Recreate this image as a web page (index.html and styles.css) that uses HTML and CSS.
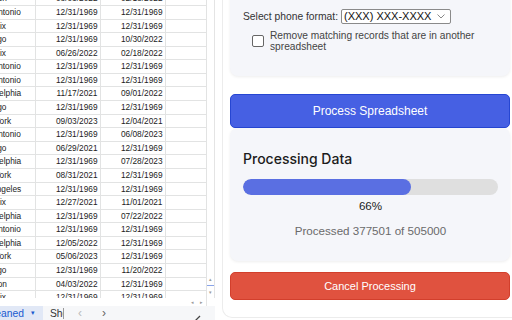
FILE: index.html
```html
<!DOCTYPE html>
<html lang="en">
<head>
    <meta charset="UTF-8">
    <meta name="viewport" content="width=device-width, initial-scale=1.0">
    <title>Spreadsheet Cleaner</title>
    <link rel="stylesheet" href="styles.css">
</head>
<body>
    <!-- Spreadsheet behind the sidebar -->
    <div class="sheet">
        <div class="grid-area">
            <div class="cells">
                <div class="row"><div>Houston</div><div class="num">08/03/2022</div><div class="num">02/18/2022</div><div></div></div>
                <div class="row"><div>San Antonio</div><div class="num">12/31/1969</div><div class="num">12/31/1969</div><div></div></div>
                <div class="row"><div>Phoenix</div><div class="num">12/31/1969</div><div class="num">12/31/1969</div><div></div></div>
                <div class="row"><div>Chicago</div><div class="num">12/31/1969</div><div class="num">10/30/2022</div><div></div></div>
                <div class="row"><div>Phoenix</div><div class="num">06/26/2022</div><div class="num">02/18/2022</div><div></div></div>
                <div class="row"><div>San Antonio</div><div class="num">12/31/1969</div><div class="num">12/31/1969</div><div></div></div>
                <div class="row"><div>San Antonio</div><div class="num">12/31/1969</div><div class="num">12/31/1969</div><div></div></div>
                <div class="row"><div>Philadelphia</div><div class="num">11/17/2021</div><div class="num">09/01/2022</div><div></div></div>
                <div class="row"><div>Chicago</div><div class="num">12/31/1969</div><div class="num">12/31/1969</div><div></div></div>
                <div class="row"><div>New York</div><div class="num">09/03/2023</div><div class="num">12/04/2021</div><div></div></div>
                <div class="row"><div>San Antonio</div><div class="num">12/31/1969</div><div class="num">06/08/2023</div><div></div></div>
                <div class="row"><div>Chicago</div><div class="num">06/29/2021</div><div class="num">12/31/1969</div><div></div></div>
                <div class="row"><div>Philadelphia</div><div class="num">12/31/1969</div><div class="num">07/28/2023</div><div></div></div>
                <div class="row"><div>New York</div><div class="num">08/31/2021</div><div class="num">12/31/1969</div><div></div></div>
                <div class="row"><div>Los Angeles</div><div class="num">12/31/1969</div><div class="num">12/31/1969</div><div></div></div>
                <div class="row"><div>Phoenix</div><div class="num">12/27/2021</div><div class="num">11/01/2021</div><div></div></div>
                <div class="row"><div>Philadelphia</div><div class="num">12/31/1969</div><div class="num">07/22/2022</div><div></div></div>
                <div class="row"><div>San Antonio</div><div class="num">12/31/1969</div><div class="num">12/31/1969</div><div></div></div>
                <div class="row"><div>Philadelphia</div><div class="num">12/05/2022</div><div class="num">12/31/1969</div><div></div></div>
                <div class="row"><div>New York</div><div class="num">05/06/2023</div><div class="num">12/31/1969</div><div></div></div>
                <div class="row"><div>Chicago</div><div class="num">12/31/1969</div><div class="num">11/20/2022</div><div></div></div>
                <div class="row"><div>Houston</div><div class="num">04/03/2022</div><div class="num">12/31/1969</div><div></div></div>
                <div class="row"><div>Phoenix</div><div class="num">12/31/1969</div><div class="num">12/31/1969</div><div></div></div>
            </div>
            <div class="vscroll">
                <span class="arrow">&#9652;</span>
                <span class="thumb"></span>
                <span class="arrow">&#9662;</span>
            </div>
        </div>
        <div class="hscroll">
            <span class="arrow">&#9666;</span>
            <span class="arrow">&#9656;</span>
        </div>
        <div class="tabs">
            <div class="tab active">Cleaned <span class="caret">&#9662;</span></div>
            <div class="tab plain"><span class="tab-name">Sheet1</span></div>
            <span class="nav dim">&#8249;</span>
            <span class="nav">&#8250;</span>
            <span class="tick">
                <svg width="8" height="8" viewBox="0 0 8 8"><path d="M1 7 L3 5 L7 1" fill="none" stroke="#444" stroke-width="1.2"/></svg>
            </span>
        </div>
    </div>

    <!-- Sidebar -->
    <div class="sidebar">
        <div class="card options">
            <div class="format-row">
                <label for="phone-format">Select phone format:</label>
                <span class="select-wrap">
                    <select id="phone-format">
                        <option>(XXX) XXX-XXXX</option>
                    </select>
                    <svg class="chevron" width="8" height="5" viewBox="0 0 8 5"><path d="M0.5 0.5 L4 4 L7.5 0.5" fill="none" stroke="#888" stroke-width="1"/></svg>
                </span>
            </div>
            <label class="check-row">
                <input type="checkbox">
                <span>Remove matching records that are in another spreadsheet</span>
            </label>
        </div>

        <button class="btn btn-primary">Process Spreadsheet</button>

        <div class="card progress-card">
            <h2>Processing Data</h2>
            <div class="bar"><div class="bar-fill" style="width: 66%"></div></div>
            <div class="percent">66%</div>
            <div class="count">Processed 377501 of 505000</div>
        </div>

        <button class="btn btn-cancel">Cancel Processing</button>
    </div>
</body>
</html>
```

FILE: styles.css
```css
/* Basic Reset */
* {
    margin: 0;
    padding: 0;
    box-sizing: border-box;
}

body {
    width: 512px;
    height: 320px;
    overflow: hidden;
    background-color: #fff;
    display: flex;
    font-family: 'Liberation Sans', Arial, sans-serif;
    color: #222;
}

/* Spreadsheet */
.sheet {
    width: 215px;
    flex: none;
    display: flex;
    flex-direction: column;
}

.grid-area {
    height: 298px;
    display: flex;
    overflow: hidden;
}

.cells {
    width: 207px;
    overflow: hidden;
    margin-top: -7.6px;
}

.row {
    display: grid;
    grid-template-columns: 62px 65px 65px 41px;
    margin-left: -26px;
    height: 13.58px;
    border-bottom: 1px solid #e2e3e3;
    font-size: 8.3px;
    color: #222;
}

.row div {
    border-right: 1px solid #e2e3e3;
    padding: 0 2px;
    white-space: nowrap;
    overflow: hidden;
    line-height: 12.6px;
}

.row .num {
    text-align: right;
    padding-right: 2.5px;
}

.vscroll {
    width: 8px;
    border-right: 1px solid #e4e4e4;
    display: flex;
    flex-direction: column;
    justify-content: flex-end;
    align-items: center;
    padding-bottom: 3px;
}

.vscroll .arrow {
    font-size: 5px;
    color: #9a9a9a;
    line-height: 6px;
}

.vscroll .thumb {
    width: 7px;
    height: 1px;
    background-color: #8aa4e8;
    margin: 3px 0;
}

.hscroll {
    height: 8px;
    width: 207px;
    display: flex;
    justify-content: flex-end;
    align-items: center;
    gap: 6px;
    padding-right: 3px;
    border-right: 1px solid #e4e4e4;
}

.hscroll .arrow {
    font-size: 5px;
    color: #9a9a9a;
}

/* Sheet tabs */
.tabs {
    height: 14px;
    display: flex;
    align-items: center;
    background-color: #f6f7f9;
    font-size: 10.3px;
    color: #444;
}

.tab {
    height: 14px;
    display: flex;
    align-items: center;
    white-space: nowrap;
}

.tab.active {
    width: 43px;
    background-color: #e1e8f6;
    color: #1a5bd0;
    margin-right: 7px;
    justify-content: flex-end;
    padding-right: 8px;
}

.caret {
    font-size: 7px;
    margin-left: 7px;
}

.tab.plain {
    width: 14px;
    overflow: hidden;
    border-right: 1px solid #999;
    height: 11px;
}

.tab-name {
    color: #333;
}

.nav {
    font-size: 12px;
    color: #666;
    margin-left: 20px;
    line-height: 14px;
}

.nav.dim {
    color: #bbb;
    margin-left: 14px;
}

.tick {
    margin-left: 87px;
    display: flex;
    align-self: flex-end;
    margin-bottom: -3px;
}

/* Sidebar */
.sidebar {
    flex: 1;
    height: 318px;
    margin-left: 7px;
    border-left: 1px solid #ececec;
    border-bottom: 1px solid #ececec;
    border-bottom-left-radius: 10px;
    padding: 0 2px 17px 7px;
    display: flex;
    flex-direction: column;
}

.card {
    background-color: #f5f6fa;
    border-radius: 8px;
    box-shadow: 0 1px 3px rgba(0, 0, 0, 0.07);
}

.options {
    margin-top: -12px;
    padding: 21px 13px 25px;
    height: 88px;
}

.format-row {
    display: flex;
    align-items: center;
    gap: 3px;
    font-size: 10.3px;
    color: #333;
    height: 15px;
}

.select-wrap {
    position: relative;
    display: inline-flex;
}

.select-wrap select {
    appearance: none;
    width: 110px;
    height: 15px;
    border: 1px solid #8a8a8a;
    border-radius: 2px;
    background-color: #fff;
    font-family: 'Liberation Sans', Arial, sans-serif;
    font-size: 11px;
    color: #111;
    padding: 0 0 0 2px;
    line-height: 13px;
}

.chevron {
    position: absolute;
    right: 6px;
    top: 5px;
}

.check-row {
    display: flex;
    align-items: center;
    gap: 6px;
    margin-top: 6px;
    padding-left: 9px;
    font-size: 10.2px;
    line-height: 11px;
    color: #444;
}

.check-row input {
    appearance: none;
    flex: none;
    width: 12px;
    height: 12px;
    border: 1px solid #666;
    border-radius: 2px;
    background-color: #fff;
}

/* Buttons */
.btn {
    display: block;
    width: 100%;
    border-radius: 5px;
    color: #fff;
    font-family: 'Liberation Sans', Arial, sans-serif;
    cursor: pointer;
}

.btn-primary {
    margin-top: 18px;
    height: 34px;
    background-color: #4660e3;
    border: 1px solid #2646d2;
    font-size: 12px;
}

.btn-cancel {
    margin-top: 11px;
    height: 28px;
    background-color: #e0523f;
    border: 1px solid #d23f2c;
    font-size: 11px;
}

/* Progress card */
.progress-card {
    height: 134px;
    padding: 22px 12px 0 13px;
}

.progress-card h2 {
    font-family: 'Inter', 'Liberation Sans', sans-serif;
    font-size: 14px;
    font-weight: 500;
    line-height: 18px;
    color: #1c1c1c;
}

.bar {
    margin-top: 11px;
    height: 16px;
    background-color: #dfdfdf;
    border-radius: 8px;
    overflow: hidden;
}

.bar-fill {
    height: 100%;
    background-color: #5a6fe2;
    border-radius: 8px;
}

.percent {
    margin-top: 4px;
    text-align: center;
    font-size: 11.6px;
    line-height: 14px;
    color: #222;
}

.count {
    margin-top: 11px;
    text-align: center;
    font-size: 11.6px;
    line-height: 14px;
    color: #6a6a6a;
}
```
